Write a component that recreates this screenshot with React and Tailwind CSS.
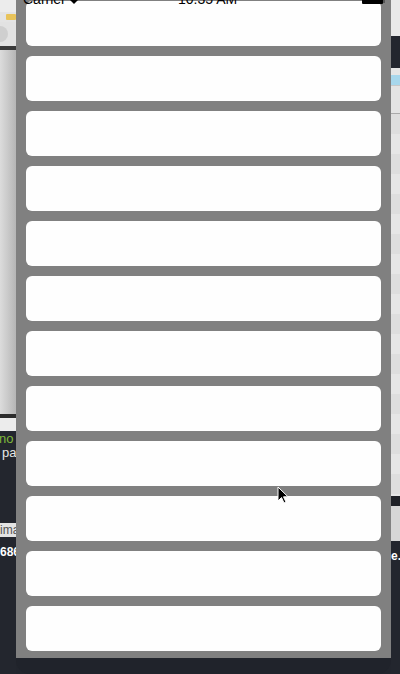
import React from "react";

// one white row of the table view
const Row = () => <div className="h-[45px] shrink-0 rounded-md bg-[#fefefe]" />;

const LeftStrip = () => (
  <div className="w-[16px] shrink-0 flex flex-col overflow-hidden font-['Liberation_Sans',sans-serif]">
    <div className="h-[12px] bg-[#ececec]" />
    <div className="h-[10px] bg-[#e4e4e4] flex items-center pl-[6px]">
      <div className="w-[10px] h-[6px] bg-[#e8c35a] rounded-[1px]" />
    </div>
    <div className="h-[24px] bg-[#e2e2e2] flex items-center">
      <div className="w-[16px] h-[16px] -ml-[8px] rounded-full bg-[#cfcfcf]" />
    </div>
    <div className="h-[4px] bg-[#3a3a3a]" />
    <div className="h-[364px] bg-gradient-to-r from-[#dcdcdc] via-[#c9c9c9] to-[#b5b5b5]" />
    <div className="h-[4px] bg-[#2c2c2c]" />
    <div className="h-[13px] bg-[#ececec]" />
    <div className="h-[92px] bg-[#23262e] text-[13px] leading-[13px] pt-[1px]">
      <div className="text-[#7fb83a] -ml-[1px]">no</div>
      <div className="text-[#e6e6e6] pl-[2px] mt-[1px]">pa</div>
    </div>
    <div className="h-[14px] bg-[#e3e3e3] text-[12px] leading-[14px] text-[#555]">ima</div>
    <div className="h-[30px] bg-[#23262e] text-[12px] font-bold text-white leading-[30px]">686</div>
    <div className="flex-1 bg-[#23262e]" />
  </div>
);

const RightStrip = () => (
  <div className="w-[9px] shrink-0 flex flex-col overflow-hidden font-['Liberation_Sans',sans-serif]">
    <div className="h-[36px] bg-[#e8e8e8]" />
    <div className="h-[32px] bg-[#23262e]" />
    <div className="h-[7px] bg-[#e6e6e6]" />
    <div className="h-[10px] bg-[#a7d7ec]" />
    <div className="h-[1px] bg-[#c8c8c8]" />
    <div className="h-[27px] bg-[#e4e4e4]" />
    <div className="h-[1px] bg-[#aaaaaa]" />
    {Array.from({ length: 19 }).map((_, i) => (
      <div key={i} className={i % 2 ? "h-[20px] bg-[#e6e6e6]" : "h-[20px] bg-[#dedede]"} />
    ))}
    <div className="h-[2px] bg-[#e6e6e6]" />
    <div className="h-[10px] bg-[#1f2127]" />
    <div className="h-[35px] bg-[#d6d6d6]" />
    <div className="h-[30px] bg-[#23262e] text-[12px] font-bold text-white leading-[30px]">e.</div>
    <div className="flex-1 bg-[#23262e]" />
  </div>
);

export default function App() {
  return (
    <div className="w-[400px] h-[674px] relative overflow-hidden bg-[#22252d] flex">
      <LeftStrip />
      <div className="w-[375px] shrink-0 flex flex-col">
        <div className="relative h-[658px] bg-[#808080] px-[10px] pt-[1px] pb-[7px] flex flex-col gap-[10px]">
          {Array.from({ length: 12 }).map((_, i) => (
            <Row key={i} />
          ))}
          {/* status bar, mostly scrolled off the top */}
          <div className="absolute left-0 right-0 top-0 h-[6px] overflow-hidden font-['Liberation_Sans',sans-serif] text-[14px] text-black">
            <span className="absolute left-[7px] -top-[11px]">Carrier</span>
            <svg className="absolute left-[54px] top-0" width="8" height="4" viewBox="0 0 8 4">
              <path d="M0 0 L8 0 L4 4 Z" fill="#000" />
            </svg>
            <span className="absolute left-[162px] -top-[11px]">10:35 AM</span>
            <div className="absolute left-[346px] top-0 w-[21px] h-[4px] bg-black rounded-b-[1px]" />
            <div className="absolute left-[367px] top-0 w-[2px] h-[3px] bg-[#555]" />
          </div>
        </div>
        <div className="flex-1 bg-[#20232b] rounded-b-[14px]" />
      </div>
      <RightStrip />
      {/* mouse pointer */}
      <svg className="absolute left-[277px] top-[486px]" width="12" height="19" viewBox="0 0 12 19">
        <path d="M1 1 L1 15 L4.5 11.5 L7 17 L9 16 L6.5 10.8 L11 10.8 Z" fill="#000" stroke="#fff" strokeWidth="1" />
      </svg>
    </div>
  );
}
